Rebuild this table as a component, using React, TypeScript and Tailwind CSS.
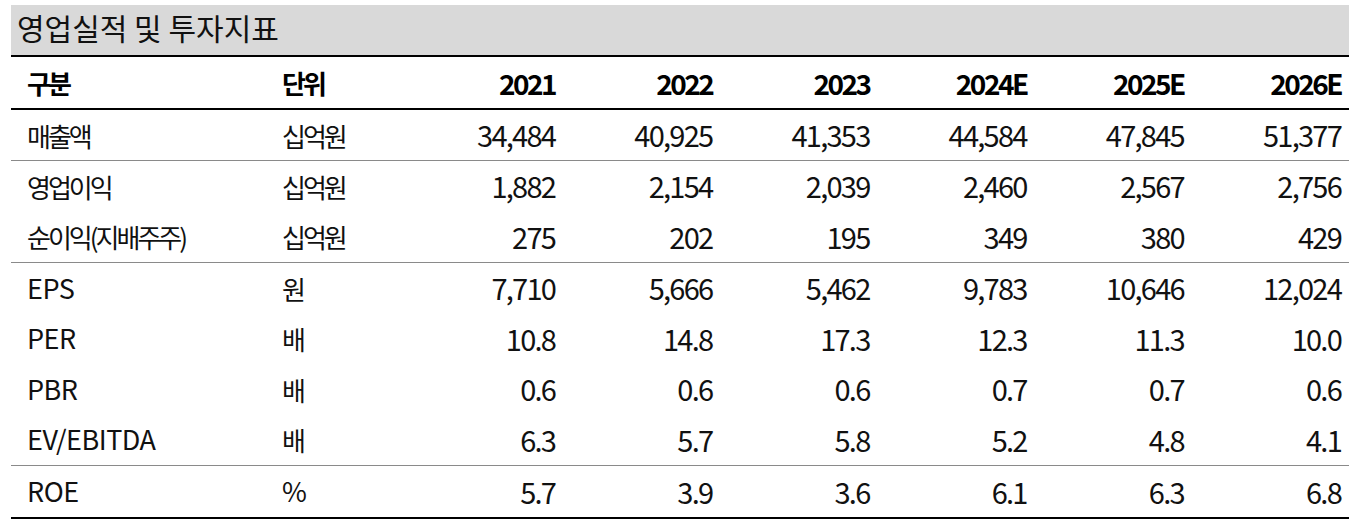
import React from "react";

const years = ["2021", "2022", "2023", "2024E", "2025E", "2026E"];

type Row = { label: string; unit: string; values: string[]; h: string; line?: boolean; latin?: boolean };

const rows: Row[] = [
  { label: "매출액", unit: "십억원", values: ["34,484", "40,925", "41,353", "44,584", "47,845", "51,377"], h: "h-[50px]", line: true },
  { label: "영업이익", unit: "십억원", values: ["1,882", "2,154", "2,039", "2,460", "2,567", "2,756"], h: "h-[50px]" },
  { label: "순이익(지배주주)", unit: "십억원", values: ["275", "202", "195", "349", "380", "429"], h: "h-[51px]", line: true },
  { label: "EPS", unit: "원", values: ["7,710", "5,666", "5,462", "9,783", "10,646", "12,024"], h: "h-[50px]", latin: true },
  { label: "PER", unit: "배", values: ["10.8", "14.8", "17.3", "12.3", "11.3", "10.0"], h: "h-[51px]", latin: true },
  { label: "PBR", unit: "배", values: ["0.6", "0.6", "0.6", "0.7", "0.7", "0.6"], h: "h-[50px]", latin: true },
  { label: "EV/EBITDA", unit: "배", values: ["6.3", "5.7", "5.8", "5.2", "4.8", "4.1"], h: "h-[51px]", line: true, latin: true },
  { label: "ROE", unit: "%", values: ["5.7", "3.9", "3.6", "6.1", "6.3", "6.8"], h: "h-[51px]", latin: true },
];

const font = { fontFamily: '"Noto Sans CJK KR", "Noto Sans", sans-serif' };

export default function App() {
  return (
    <div className="w-[1359px] h-[527px] bg-white pt-[5px] pl-[11px]" style={font}>
      <div className="w-[1338px]">
        <div className="h-[50px] bg-[#d9d9d9] pl-[6px] flex items-center text-[30px] text-[#111] pb-[5px]">
          영업실적 및 투자지표
        </div>
        <div className="h-[2px] bg-black" />
        <div className="h-[51px] grid grid-cols-[255px_140px_repeat(6,1fr)] items-center font-bold text-black">
          <div className="pl-[16px] text-[26px] tracking-[-3px]">구분</div>
          <div className="pl-[16px] text-[26px] tracking-[-3px]">단위</div>
          {years.map((y) => (
            <div key={y} className="text-right pr-[8px] text-[28px] tracking-[-2.5px]">{y}</div>
          ))}
        </div>
        <div className="h-[2px] bg-black" />
        {rows.map((r) => (
          <div key={r.label} className={r.line ? "border-b border-[#8a8a8a]" : ""}>
            <div className={`${r.h} grid grid-cols-[255px_140px_repeat(6,1fr)] items-center text-[#111]`}>
              <div className={r.latin ? "pl-[16px] text-[27px] tracking-[-0.5px]" : "pl-[16px] text-[26px] tracking-[-3px]"}>{r.label}</div>
              <div className={r.unit === "%" ? "pl-[16px] text-[27px]" : "pl-[16px] text-[26px] tracking-[-3px]"}>{r.unit}</div>
              {r.values.map((v, i) => (
                <div key={i} className="text-right pr-[8px] text-[29px] tracking-[-1.75px]">{v}</div>
              ))}
            </div>
          </div>
        ))}
        <div className="h-[2px] bg-black" />
      </div>
    </div>
  );
}
